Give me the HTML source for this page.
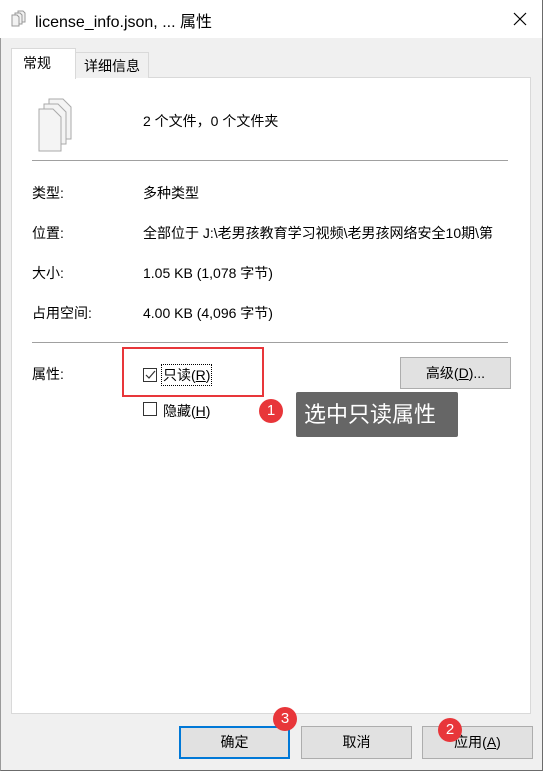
<!DOCTYPE html><html><head><meta charset="utf-8"><style>
*{margin:0;padding:0;box-sizing:border-box}
body{width:543px;height:771px;overflow:hidden;font-family:"Liberation Sans","Noto Sans CJK SC",sans-serif;font-size:14px;color:#000;background:#f0f0f0;position:relative}
.a{position:absolute}
.btn{position:absolute;background:#e1e1e1;border:1px solid #adadad;text-align:center;line-height:29px;font-size:14px}
.badge{position:absolute;width:24px;height:24px;border-radius:12px;background:#e8363a;color:#fff;text-align:center;line-height:24px;font-size:15px}
.cb{position:absolute;width:14px;height:14px;border:1px solid #333;background:#fff}
</style></head><body>
<div class="a" style="left:0;top:0;width:543px;height:771px;border:1px solid #6b6b6b;border-top:none;border-left:1px solid #9a9a9a"></div>
<div class="a" style="left:0;top:0;width:542px;height:38px;background:#fff"></div>
<svg class="a" style="left:11px;top:10px" width="16" height="18"><path d="M7 1h5l2 2v9H7z" fill="#f2f2f2" stroke="#999"/><path d="M4 3h5l2 2v9H4z" fill="#f2f2f2" stroke="#999"/><path d="M1 5h5l2 2v9H1z" fill="#f2f2f2" stroke="#999"/></svg>
<div class="a" style="left:35px;top:8px;font-size:16px">license_info.json, ... 属性</div>
<svg class="a" style="left:513px;top:12px" width="14" height="14"><path d="M1 1L13 13M13 1L1 13" stroke="#000" stroke-width="1.2"/></svg>
<div class="a" style="left:11px;top:77px;width:520px;height:637px;background:#fff;border:1px solid #d9d9d9"></div>
<div class="a" style="left:75px;top:52px;width:74px;height:26px;background:#f0f0f0;border:1px solid #d9d9d9;border-bottom:none;text-align:center;line-height:26px">详细信息</div>
<div class="a" style="left:11px;top:48px;width:65px;height:31px;background:#fff;border:1px solid #d9d9d9;border-bottom:none;padding:4px 0 0 11px">常规</div>
<svg class="a" style="left:35px;top:98px" width="42" height="56"><g fill="#f4f4f4" stroke="#aaa"><path d="M14 1h14l8 8v32H14z"/><path d="M9 6h14l8 8v32H9z"/><path d="M4 11h14l8 8v34H4z"/></g></svg>
<div class="a" style="left:143px;top:111px">2 个文件，0 个文件夹</div>
<div class="a" style="left:32px;top:160px;width:476px;height:1px;background:#a0a0a0"></div>
<div class="a" style="left:32px;top:183px">类型:</div><div class="a" style="left:143px;top:183px">多种类型</div>
<div class="a" style="left:32px;top:223px">位置:</div><div class="a" style="left:143px;top:223px;width:365px;overflow:hidden;white-space:nowrap">全部位于 J:\老男孩教育学习视频\老男孩网络安全10期\第</div>
<div class="a" style="left:32px;top:263px">大小:</div><div class="a" style="left:143px;top:263px">1.05 KB (1,078 字节)</div>
<div class="a" style="left:32px;top:303px">占用空间:</div><div class="a" style="left:143px;top:303px">4.00 KB (4,096 字节)</div>
<div class="a" style="left:32px;top:342px;width:476px;height:1px;background:#a0a0a0"></div>
<div class="a" style="left:32px;top:364px">属性:</div>
<div class="cb" style="left:143px;top:368px"></div>
<svg class="a" style="left:145px;top:370px" width="11" height="11"><path d="M1 5l3 3 6-7" fill="none" stroke="#333" stroke-width="1.2"/></svg>
<div class="a" style="left:161px;top:364px;border:1px dotted #000;padding:0 1px;line-height:20px">只读(<u>R</u>)</div>
<div class="a" style="left:122px;top:347px;width:142px;height:50px;border:2px solid #e8363a"></div>
<div class="cb" style="left:143px;top:402px"></div>
<div class="a" style="left:163px;top:401px">隐藏(<u>H</u>)</div>
<div class="btn" style="left:400px;top:357px;width:111px;height:32px;line-height:30px">高级(<u>D</u>)...</div>
<div class="badge" style="left:259px;top:399px">1</div>
<div class="a" style="left:290px;top:409px;width:0;height:0;border:6px solid transparent;border-right-color:#666"></div>
<div class="a" style="left:296px;top:392px;width:162px;height:45px;background:#666;color:#fff;font-size:22px;line-height:45px;padding-left:8px;border-radius:2px">选中只读属性</div>
<div class="btn" style="left:179px;top:726px;width:111px;height:33px;border:2px solid #0078d7">确定</div>
<div class="btn" style="left:301px;top:726px;width:111px;height:33px;line-height:31px">取消</div>
<div class="btn" style="left:422px;top:726px;width:111px;height:33px;line-height:31px">应用(<u>A</u>)</div>
<div class="badge" style="left:273px;top:707px">3</div>
<div class="badge" style="left:438px;top:718px">2</div>
</body></html>
